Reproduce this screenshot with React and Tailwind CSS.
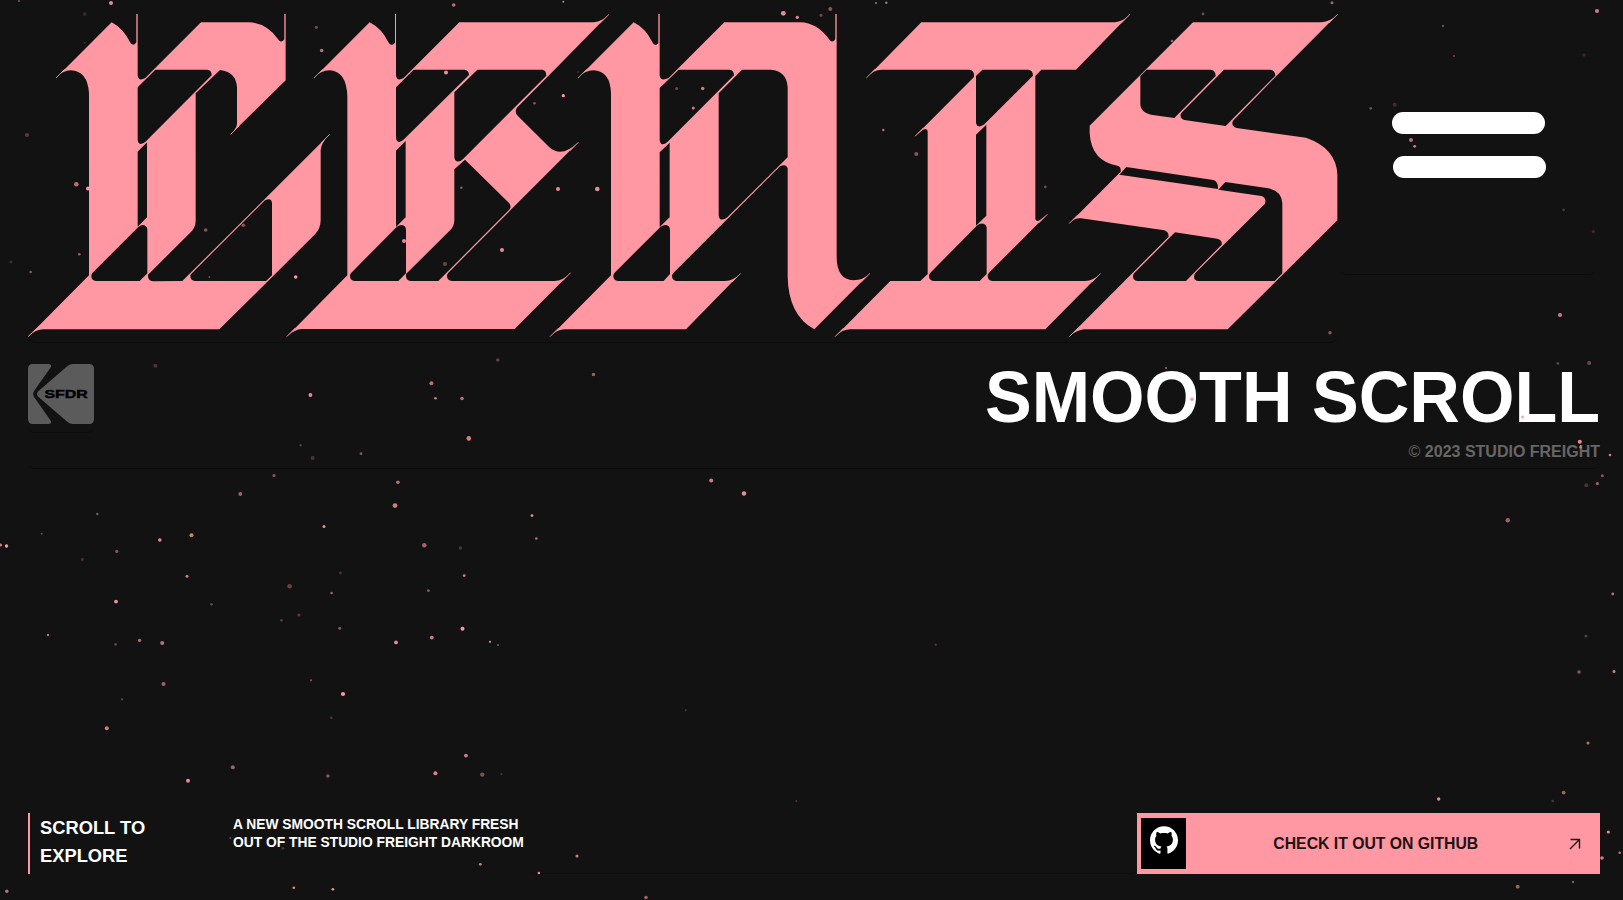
import React from "react";

const DOTS = [
  [111, 3, 2, 0.9], [84.7, 14, 2, 0.15], [84.7, 43, 1, 0.2], [27, 135, 2, 0.3], [76.3, 184.3, 2.3, 0.7], [88, 188.5, 2, 1],
  [79.3, 254.3, 1.3, 0.6], [30.7, 272, 1.3, 0.5], [205.7, 230, 1.8, 0.5], [243.3, 225.3, 1.8, 0.5], [209.3, 277, 1, 0.4],
  [295.7, 277, 1.8, 1], [316.3, 27.3, 1.6, 0.4], [321.6, 50.5, 1.7, 0.7], [453.7, 5, 1.8, 0.7], [563.3, 1.7, 1, 0.8],
  [446, 72.5, 2, 0.95], [534.5, 103.3, 1.3, 0.5], [563.3, 95.7, 1.6, 1], [461.3, 187.7, 1.3, 0.5], [558, 189, 2, 0.9],
  [597.3, 189, 2.3, 0.9], [404, 241, 2, 0.9], [502, 250, 2, 0.9], [445, 264, 2, 0.4], [578, 72, 1.2, 0.15],
  [783.3, 13.3, 2.4, 0.9], [797.3, 17.3, 1.6, 0.9], [821, 15.3, 1.5, 0.4], [830.3, 9, 2, 0.5], [676.7, 88.5, 1.5, 0.4],
  [702.7, 88.5, 1.7, 0.8], [693.3, 108, 1.5, 0.8], [876, 3, 1, 0.7], [886.3, 2.7, 1.2, 0.7], [883.3, 130, 1.2, 0.7],
  [916.3, 154, 2, 0.5], [1045.3, 187, 1.4, 0.4], [1332, 2.7, 1.5, 0.6], [1203, 14, 1.4, 0.4], [1172, 41, 1.3, 0.6],
  [1330, 332.7, 1.8, 0.5], [1370.7, 108.3, 1.4, 0.4], [1394.7, 104.7, 2, 0.2], [1411, 140, 2, 0.7], [1414.7, 146.3, 1.4, 0.8],
  [1563.7, 210, 1.4, 0.25], [1593.3, 231.5, 1.6, 0.2], [1560, 315, 2, 0.8], [1443, 26, 1.2, 0.4], [1454, 56, 1, 0.4],
  [1584, 55, 1.8, 0.15], [1597, 11, 2, 0.8], [19, 1, 1, 0.5], [11, 262, 1.5, 0.2], [155.4, 365.7, 2, 0.25],
  [310.4, 395, 1.9, 0.9], [431.4, 383.3, 2, 0.7], [435.5, 398.3, 1.3, 0.8], [462, 398.5, 1.8, 0.7], [497.8, 360, 1.8, 0.35],
  [468.8, 438.4, 2.3, 0.8], [300.5, 445.3, 1.2, 0.3], [312.6, 458, 2, 0.25], [361, 453.7, 1.4, 0.5], [274, 475.5, 1.6, 0.5],
  [397.9, 482.3, 1.8, 0.7], [240.3, 494, 1.9, 0.6], [395, 505.6, 2.4, 0.8], [97.3, 514, 1.2, 0.5], [41.7, 533.7, 1, 0.4],
  [0.5, 545, 1.6, 0.8], [6.5, 546, 1.7, 1], [159.8, 540, 1.8, 0.9], [191.5, 535.3, 2, 0.8], [324, 526.5, 1.5, 0.9],
  [424.3, 545.3, 2.3, 0.6], [460.3, 548, 1.7, 0.25], [532, 515.6, 1.4, 0.9], [536.3, 538.5, 1.3, 0.7], [116.8, 551.4, 1.6, 0.5],
  [82.3, 559.5, 1.4, 0.25], [187, 576.3, 1.5, 0.8], [340.4, 573, 1.4, 0.25], [464.2, 575.6, 1.4, 0.8], [593.5, 374.5, 1.7, 0.6],
  [711.2, 480.5, 2, 0.8], [744, 493.5, 2.2, 0.9], [289.6, 586.3, 2.3, 0.35], [331.6, 593, 1.3, 0.6], [428.4, 590.7, 1.4, 0.5],
  [116, 601.6, 1.9, 0.95], [211.4, 604.3, 1.4, 0.35], [298.9, 615, 1.6, 0.3], [281.4, 620.3, 1.4, 0.3], [339.8, 628.3, 1.5, 0.5],
  [462.5, 628.7, 2, 1], [48, 635, 1.2, 0.7], [139.6, 640.3, 1.6, 0.7], [162.2, 643, 2, 0.7], [115.5, 644.4, 1.4, 0.35],
  [396, 642.4, 1.9, 0.9], [431.8, 637.6, 1.9, 0.8], [490, 641.8, 1.1, 0.9], [498, 645, 1, 0.5], [163.5, 684, 2, 0.6],
  [311, 680.3, 1.1, 0.5], [343, 694, 2.1, 1], [122, 699.3, 1.1, 0.4], [106.8, 728.3, 2, 0.8], [331.3, 717.8, 1.4, 0.25],
  [232.8, 767.3, 2, 0.6], [188, 780.7, 2, 0.9], [327.9, 776, 1.8, 0.5], [465.9, 755.6, 1.9, 0.8], [435.4, 773.3, 2, 0.85],
  [482.3, 774.6, 2.2, 0.45], [501.4, 774, 1.1, 0.25], [230.3, 838, 1, 0.4], [282.9, 848.3, 1.4, 0.25], [480.3, 864.3, 1.4, 0.8],
  [538.9, 873, 1.3, 0.9], [293.8, 887.7, 1.3, 0.9], [332.9, 889.3, 1.4, 0.9], [6.8, 891.3, 1.7, 0.7], [1166, 368, 1.1, 0.6],
  [1192, 399.3, 1.8, 1], [1522.6, 417, 1.6, 0.8], [1557.9, 363.5, 1.3, 0.4], [1589.2, 363, 2, 0.4], [1579.8, 441.8, 2, 0.9],
  [1580.5, 447, 1.5, 0.6], [1610, 455, 1.3, 0.8], [1602.3, 475.7, 1.5, 0.5], [1597.4, 483.5, 1.6, 0.6], [1586.3, 485.3, 2, 0.25],
  [1507.8, 520.2, 2.2, 0.6], [1612.8, 594, 1.4, 0.7], [1586, 636, 1.6, 0.3], [1579, 672, 1.8, 0.5], [1614, 671.5, 1.5, 0.8],
  [1588, 743, 1.5, 0.7], [935.7, 644.7, 1.2, 0.25], [685.7, 710.3, 1, 0.25], [796.3, 801, 1, 0.25], [577, 856, 1.5, 0.8],
  [646, 897.5, 1.8, 0.6], [1438.7, 799, 1.7, 0.9], [1563.7, 792.6, 1.9, 0.6], [1552.7, 801, 1.3, 0.25], [1608.3, 832, 1.6, 0.9],
  [1619.7, 852.7, 1.3, 0.7], [1602, 858, 1.8, 0.8], [1517.7, 886.7, 1.9, 0.6], [1573, 882, 1.2, 0.5],
];

function Particles() {
  return (
    <svg className="pointer-events-none absolute inset-0 h-full w-full" viewBox="0 0 1623 900" fill="#ff98a2" aria-hidden="true">
      {DOTS.map(([x, y, r, o], i) => (
        <circle key={i} cx={x} cy={y} r={r} opacity={o} />
      ))}
    </svg>
  );
}

function Wordmark() {
  return (
    <svg className="block h-[344px] w-[1310px]" viewBox="28 0 1310 344" fill="#ff98a2" fillRule="evenodd" role="img">
      <g transform="translate(20 0) scale(.33333)">
        <path d="M24 1010Q48 988 70 988H598L885 703Q902 685 902 660V450Q903 430 929 403L487 843L402 844Q384 844 384 828V824L512 697Q527 682 527 662V280L600 210Q648 215 651 262V370Q651 385 632 403L797 241V42H793V118Q785 130 776 120Q740 68 685 67H543L375 235Q354 245 353 225V42H349V127Q342 140 332 130Q310 85 275 67L108 234Q128 211 152 211Q203 213 207 280V826Z
          M406 209H562Q575 210 575 226L378 424Q370 432 362 432Q353 430 353 418V262Z
          M353 455L381 427V652L353 680Z
          M355 681Q368 670 378 679Q382 683 382 690V820L359 843H228Q214 842 214 828Q214 822 218 818Z
          M735 601Q755 592 756 610V826L738 843H525Q511 842 511 828Q511 824 514 821Z" />
      </g>
      <g transform="translate(280 0) scale(.33333)">
        <path d="M20 1010Q45 987 65 987H704L872 818Q850 842 822 843H516Q501 842 501 828Q501 822 505 818L694 628L895 427Q845 475 808 442L713 347Q703 337 710 324L799 234L987 43Q965 66 942 67H538L370 235Q349 245 348 225V42H345V128Q335 140 327 130Q305 85 269 67L102 234Q122 211 148 211Q200 213 202 290V826Z
          M401 209H553Q567 211 567 225L372 418Q360 430 352 424Q348 420 348 412V262Z
          M592 209H788Q799 211 799 227L550 476Q540 487 530 484Q523 480 523 472V277Z
          M348 452L377 423V652L348 681Z
          M350 681Q364 670 374 679Q378 683 378 690V820L355 843H224Q210 842 210 828Q210 822 214 818Z
          M555 479L688 610Q694 618 690 627L475 843H392Q378 842 378 828V822L508 693Q523 680 523 660V508Z" />
      </g>
      <g transform="translate(540 0) scale(.33333)">
        <path d="M30 1010Q52 988 75 988H438L602 820Q580 843 555 843H410Q396 842 396 828Q396 823 400 819L720 499Q738 490 743 505V830Q745 945 823 988L990 820Q970 841 940 841Q890 838 890 770V42H886V118Q878 130 869 120Q832 68 780 67H553L385 235Q360 245 359 225V42H355V130Q346 140 339 130Q317 85 281 67L114 234Q134 211 160 211Q211 213 213 280V826Z
          M416 209H569Q582 211 582 226L383 425Q372 435 364 432Q359 428 359 420V264Z
          M359 457L389 428V652L359 681Z
          M362 680Q376 670 386 679Q390 683 390 690V822L371 843H234Q220 842 220 828Q220 822 224 818Z
          M606 209H692Q740 212 743 262V472L562 652Q550 662 540 657Q536 653 536 645V280Z" />
      </g>
      <g transform="translate(820 0) scale(.33333)">
        <path d="M45 1010Q68 988 90 988H676L842 820Q820 843 795 843H517Q503 842 503 828Q503 822 507 818L682 643L660 660Q650 667 646 658V228L664 209H768L930 43Q908 66 885 67H304L139 234Q160 209 185 209H448Q462 211 462 225V231L285 409L309 389Q320 383 323 393V822L301 843H211Z
          M487 209H626Q639 211 639 227L493 373Q480 383 472 377Q468 374 468 366V228Z
          M468 404L499 374V647L468 677Z
          M472 676Q484 666 496 674Q500 678 500 684V822L479 843H341Q327 842 327 828Q327 822 331 818Z" />
      </g>
      <g transform="translate(1050 0) scale(.33333)">
        <path d="M57 1010Q80 990 103 988H533L862 661V525Q860 445 768 413L560 384Q542 379 549 362L677 230L863 43Q840 66 815 67H429L119 377V400Q124 485 205 498Q214 501 212 515L57 671Q75 653 93 655L343 691Q356 695 356 710Z
          M290 209H483Q497 212 497 228L373 354L303 344Q273 338 271 315V228Z
          M522 209H662Q676 212 676 227L527 378L403 360Q388 355 393 340Z
          M229 501L490 540Q505 544 504 567L208 524Z
          M526 546L655 565Q695 572 697 610V820L674 843H446Q432 842 432 830Q432 824 436 819L645 611Q650 592 634 588L505 569Z
          M375 697L502 716Q518 720 515 734L408 843H262Q249 842 249 829Q249 823 253 819Z" />
      </g>
      <g transform="scale(.33333)" fill="none" stroke="#ff98a2" strokeWidth="3" opacity=".85">
        <path d="M84 1010L110 985M168 234L194 208M692 403L718 377M989 403L963 429" />
        <path d="M860 1010L886 984M942 234L968 208M1712 818L1686 844M1735 427L1709 453M1827 43L1801 69" />
        <path d="M1650 1010L1676 984M1734 234L1760 208M2222 820L2196 846M2610 820L2584 846" />
        <path d="M2505 1010L2531 984M2599 234L2625 208M2745 409L2771 383M3142 643L3116 669M3302 820L3276 846M3390 43L3364 69" />
        <path d="M3208 1010L3234 984M3207 671L3233 645M4013 43L3987 69" />
      </g>
    </svg>
  );
}

function StudioLogo() {
  return (
    <svg className="block h-[60px] w-[66px]" viewBox="0 0 66 60" fill="#5b5b5b">
      <path d="M5 0H20Q24.500 0 22.600 3.500L5.700 27.500Q4.500 30 5.700 32.500L22.600 56.500Q24.500 60 20 60H5Q0 60 0 55V5Q0 0 5 0Z" />
      <path d="M45 0H61Q66 0 66 5V55Q66 60 61 60H45Q42 60 39.500 58L10 32.500Q8 30 10 27.500L39.500 2Q42 0 45 0Z" />
      <text x="16.400" y="34.200" textLength="43.400" lengthAdjust="spacingAndGlyphs" fill="#000" stroke="#000" strokeWidth=".4" className="font-['Liberation_Sans',sans-serif] text-[11px] font-bold">SFDR</text>
    </svg>
  );
}

function GithubMark() {
  return (
    <svg className="size-7" viewBox="0 0 24 24" fill="currentColor">
      <path d="M12 .297c-6.63 0-12 5.373-12 12 0 5.303 3.438 9.800 8.205 11.385.6.113.82-.258.82-.577 0-.285-.01-1.040-.015-2.040-3.338.724-4.042-1.610-4.042-1.610C4.422 18.070 3.633 17.700 3.633 17.700c-1.087-.744.084-.729.084-.729 1.205.084 1.838 1.236 1.838 1.236 1.070 1.835 2.809 1.305 3.495.998.108-.776.417-1.305.76-1.605-2.665-.3-5.466-1.332-5.466-5.930 0-1.310.465-2.380 1.235-3.220-.135-.303-.54-1.523.105-3.176 0 0 1.005-.322 3.300 1.230.96-.267 1.980-.399 3-.405 1.020.006 2.040.138 3 .405 2.280-1.552 3.285-1.230 3.285-1.230.645 1.653.24 2.873.12 3.176.765.84 1.230 1.910 1.230 3.220 0 4.610-2.805 5.625-5.475 5.920.42.36.81 1.096.81 2.220 0 1.606-.015 2.896-.015 3.286 0 .315.21.69.825.57C20.565 22.092 24 17.592 24 12.297c0-6.627-5.373-12-12-12" />
    </svg>
  );
}

export default function App() {
  return (
    <div className="relative flex h-[900px] w-[1623px] flex-col overflow-hidden bg-[#121212] px-[28px] font-['Liberation_Sans',Arial,sans-serif] font-bold text-white uppercase">
      <header className="flex h-[343px] shrink-0">
        <div className="h-[343px] w-[1310px] shrink-0 rounded-lg border-b border-[#0a0a0a]">
          <Wordmark />
        </div>
        <div className="ml-0.5 flex h-[275px] w-[260px] flex-col gap-[22px] rounded-md border-b border-[#0c0c0c] pt-[112px] pl-[52px]">
          <span className="block h-[22px] w-[153px] rounded-full bg-white" />
          <span className="ml-px block h-[22px] w-[153px] rounded-full bg-white" />
        </div>
      </header>

      <section className="flex h-[126px] w-[1572px] shrink-0 justify-between rounded-md border-b border-[#0c0c0c] pt-[21px]">
        <div className="h-[69px] w-[66px] rounded-md border-b border-[#0e0e0e]">
          <StudioLogo />
        </div>
        <div className="flex flex-col items-end">
          <h1 className="h-[76px] origin-right scale-x-[0.964] text-[72.700px] leading-[66px] whitespace-nowrap">Smooth scroll</h1>
          <p className="pt-px text-base leading-[22px] whitespace-nowrap text-[#666]"><span className="font-normal">©</span> 2023 Studio Freight</p>
        </div>
      </section>

      <div className="grow" />

      <footer className="mb-[26px] flex h-[61px] w-[1572px] shrink-0">
        <div className="w-[205px] border-l-2 border-[#ff98a2] pl-2.5 text-[19px] leading-[28px] whitespace-nowrap">
          <p className="origin-left scale-x-[0.964] pt-px">Scroll to<br />explore</p>
        </div>
        <p className="w-[296px] origin-left scale-x-[0.96] pt-0.5 text-[14.400px] leading-[18px] whitespace-nowrap">
          A new smooth scroll library fresh<br />out of the studio freight darkroom
        </p>
        <div className="grow rounded-md border-b border-[#0e0e0e]" />
        <a className="flex w-[463px] items-center bg-[#ff98a2] px-1 text-[#1c1416]">
          <span className="flex h-[51px] w-[45px] justify-center bg-black pt-[8px] text-white">
            <GithubMark />
          </span>
          <span className="grow scale-x-[0.985] pt-px pl-[27px] text-center text-base">Check it out on GitHub</span>
          <svg className="mr-[15px] ml-[30px] size-3" viewBox="0 0 12 12" fill="none" stroke="currentColor" strokeWidth="1.400">
            <path d="M1.500 1.500H10.500V10.500M10.500 1.500L1 11" />
          </svg>
        </a>
      </footer>

      <Particles />
    </div>
  );
}
